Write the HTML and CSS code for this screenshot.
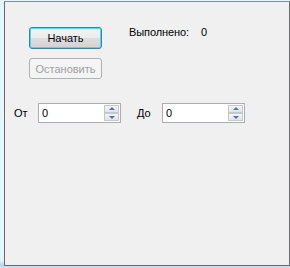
FILE: index.html
```html
<!DOCTYPE html>
<html lang="ru">
<head>
  <meta charset="UTF-8">
  <title>Счётчик</title>
  <link rel="stylesheet" href="styles.css">
</head>
<body>
  <div class="window">
    <!-- Кнопки и результат -->
    <div class="top">
      <div class="buttons">
        <button class="btn btn-focus">Начать</button>
        <button class="btn" disabled>Остановить</button>
      </div>
      <div class="status">
        <span>Выполнено:</span>
        <span class="count">0</span>
      </div>
    </div>

    <!-- Диапазон -->
    <div class="range">
      <label class="lbl" for="from">От</label>
      <div class="num">
        <input type="text" id="from" value="0">
        <div class="spin">
          <span class="up"></span>
          <span class="down"></span>
        </div>
      </div>
      <label class="lbl lbl-to" for="to">До</label>
      <div class="num">
        <input type="text" id="to" value="0">
        <div class="spin">
          <span class="up"></span>
          <span class="down"></span>
        </div>
      </div>
    </div>
  </div>
</body>
</html>
```

FILE: styles.css
```css
body {
  margin: 0;
  padding: 0;
  width: 290px;
  height: 268px;
  overflow: hidden;
  background: linear-gradient(to bottom, #e4f5fb 0%, #e4f5fb 97%, #b9d3ec 99%, #cfe4f4 100%);
  font-family: "Liberation Sans", Arial, sans-serif;
  font-size: 11px;
  color: #000;
}

.window {
  box-sizing: border-box;
  margin-top: 1px;
  margin-left: 4px;
  width: 286px;
  height: 265px;
  border: 1px solid #6a6d70;
  border-top-color: #8a9096;
  background-color: #f0f0f0;
}

.top {
  display: flex;
  align-items: flex-start;
  padding-top: 25px;
  padding-left: 24px;
}

.buttons {
  display: flex;
  flex-direction: column;
  gap: 9px;
}

.btn {
  box-sizing: border-box;
  width: 73px;
  height: 21px;
  padding: 0;
  font-family: "Liberation Sans", Arial, sans-serif;
  font-size: 11px;
  color: #000;
  border: 1px solid #707070;
  border-radius: 3px;
  background: linear-gradient(to bottom, #f2f2f2 0%, #ebebeb 48%, #dddddd 52%, #cfcfcf 100%);
  box-shadow: inset 0 0 0 1px rgba(255, 255, 255, 0.7);
}

.btn-focus {
  height: 22px;
  border-color: #3c7fb1;
  box-shadow: inset 0 0 0 1px #48d8fb;
  background: linear-gradient(to bottom, #f4f4f4 0%, #ececec 48%, #dedede 52%, #d2d2d2 100%);
}

.btn:disabled {
  color: #a0a0a0;
  border-color: #adb2b5;
  background: #f4f4f4;
  box-shadow: none;
}

.status {
  margin-left: 27px;
  margin-top: -1px;
  line-height: 13px;
  letter-spacing: -0.1px;
}

.count {
  margin-left: 9px;
}

.range {
  display: flex;
  align-items: center;
  margin-top: 24px;
  padding-left: 9px;
}

.lbl {
  width: 24px;
  line-height: 13px;
}

.lbl-to {
  width: 25px;
  margin-left: 16px;
}

.num {
  box-sizing: border-box;
  display: flex;
  width: 83px;
  height: 20px;
  border: 1px solid #abadb3;
  background: #fff;
}

.num input {
  flex: 1;
  min-width: 0;
  border: none;
  outline: none;
  padding: 0 0 0 3px;
  font-family: "Liberation Sans", Arial, sans-serif;
  font-size: 11px;
  color: #000;
  background: transparent;
}

.spin {
  display: flex;
  flex-direction: column;
  width: 15px;
  margin: 1px 1px 1px 0;
}

.spin span {
  position: relative;
  flex: 1;
  box-sizing: border-box;
  border: 1px solid #c5c9cd;
  background: linear-gradient(to bottom, #f6f6f6, #e3e3e3);
}

.spin span::after {
  content: "";
  position: absolute;
  left: 50%;
  top: 50%;
  margin-left: -3px;
  border-left: 3px solid transparent;
  border-right: 3px solid transparent;
}

.spin .up::after {
  margin-top: -2px;
  border-bottom: 3px solid #5871a4;
}

.spin .down::after {
  margin-top: -1px;
  border-top: 3px solid #5871a4;
}
```
